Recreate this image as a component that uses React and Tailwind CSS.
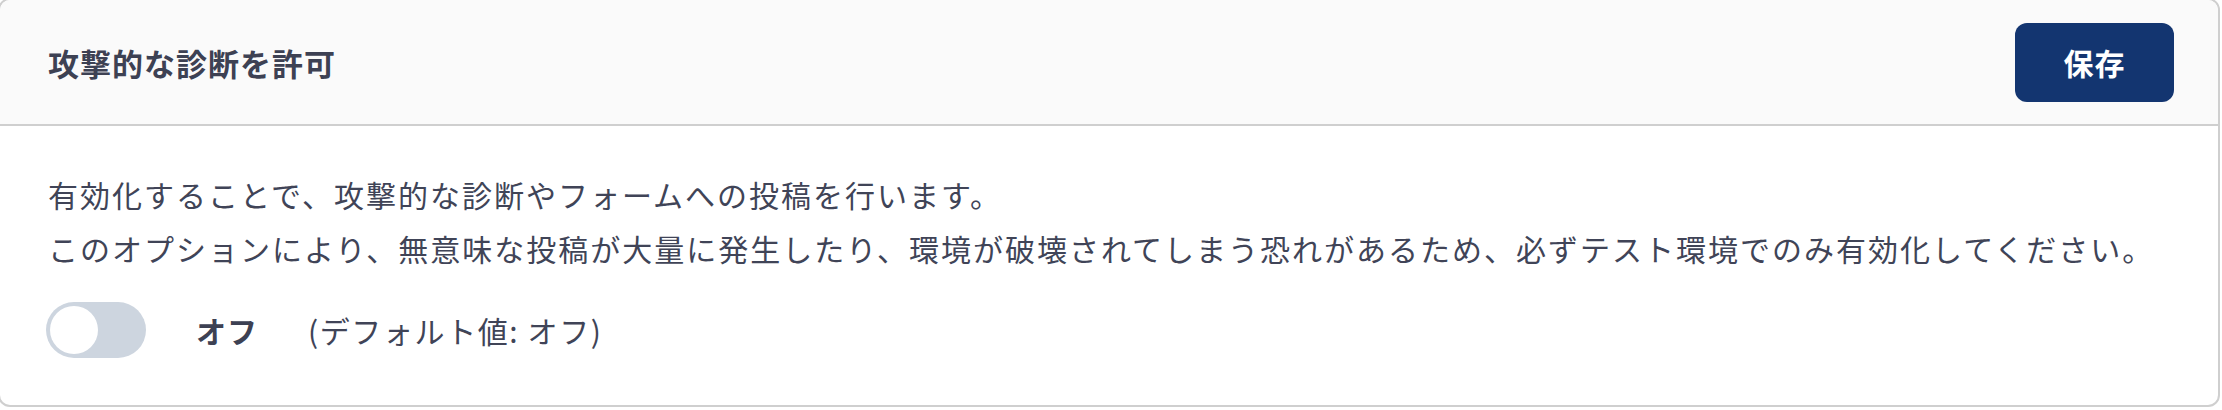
import React, { useState } from 'react';

const font = { fontFamily: '"Noto Sans CJK JP", "Noto Sans", sans-serif' };

const Toggle = ({ checked, onChange }) => (
  <button
    type="button"
    onClick={() => onChange(!checked)}
    className={`relative -ml-[2px] h-[56px] w-[100px] shrink-0 rounded-full ${checked ? 'bg-[#133570]' : 'bg-[#cdd5df]'}`}
  >
    <span
      className={`absolute top-[4px] h-[48px] w-[48px] rounded-full bg-white ${checked ? 'left-[48px]' : 'left-[4px]'}`}
    />
  </button>
);

export default function App() {
  const [enabled, setEnabled] = useState(false);

  return (
    <div className="h-[410px] w-[2222px] overflow-hidden bg-white" style={font}>
      <div className="-ml-[2px] -mt-[2px] w-[2222px] overflow-hidden rounded-[12px] border-2 border-[#cfcfcf] bg-white">
        {/* Header */}
        <div className="flex h-[126px] items-center justify-between border-b-2 border-[#cfcfcf] bg-[#fafafa] pl-[48px] pr-[44px]">
          <h2 className="text-[31px] font-bold leading-none tracking-[1px] text-[#3d4153]">
            攻撃的な診断を許可
          </h2>
          <button
            type="button"
            className="h-[79px] w-[159px] rounded-[12px] bg-[#133570] text-[30px] font-bold tracking-[1px] text-white"
          >
            保存
          </button>
        </div>

        {/* Body */}
        <div className="px-[48px] pb-[47px] pt-[41px]">
          <p className="text-[30px] leading-[54px] tracking-[2px] text-[#404457]">
            有効化することで、攻撃的な診断やフォームへの投稿を行います。
            <br />
            このオプションにより、無意味な投稿が大量に発生したり、環境が破壊されてしまう恐れがあるため、必ずテスト環境でのみ有効化してください。
          </p>
          <div className="mt-[27px] flex items-center">
            <Toggle checked={enabled} onChange={setEnabled} />
            <span className="ml-[50px] text-[30px] font-bold tracking-[1px] text-[#3d4153]">
              {enabled ? 'オン' : 'オフ'}
            </span>
            <span className="ml-[50px] text-[30px] tracking-[1.6px] text-[#404457]">
              (デフォルト値: オフ)
            </span>
          </div>
        </div>
      </div>
    </div>
  );
}
